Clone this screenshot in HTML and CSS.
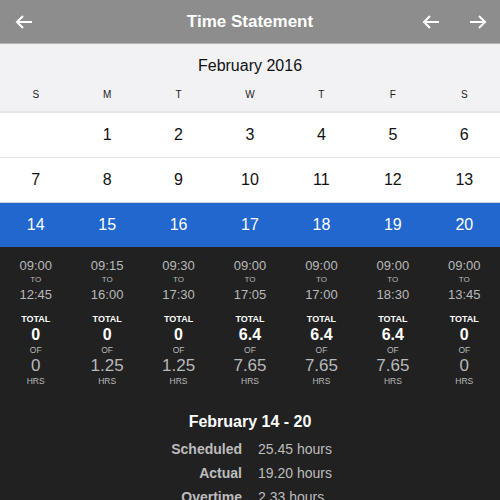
FILE: index.html
```html
<!DOCTYPE html>
<html>
<head>
<meta charset="utf-8">
<link rel="stylesheet" href="styles.css">
</head>
<body>
<div class="app">
  <header class="topbar">
    <button class="icon-btn back" aria-label="Back">
      <svg width="18" height="14" viewBox="0 0 18 14"><path d="M17 7H2M8 1L2 7l6 6" fill="none" stroke="#fff" stroke-width="2"/></svg>
    </button>
    <h1 class="title">Time Statement</h1>
    <div class="nav">
      <button class="icon-btn" aria-label="Previous">
        <svg width="18" height="14" viewBox="0 0 18 14"><path d="M17 7H2M8 1L2 7l6 6" fill="none" stroke="#fff" stroke-width="2"/></svg>
      </button>
      <button class="icon-btn" aria-label="Next">
        <svg width="18" height="14" viewBox="0 0 18 14"><path d="M1 7h15M10 1l6 6-6 6" fill="none" stroke="#fff" stroke-width="2"/></svg>
      </button>
    </div>
  </header>

  <section class="month">
    <div class="month-name">February 2016</div>
    <div class="weekdays">
      <span>S</span><span>M</span><span>T</span><span>W</span><span>T</span><span>F</span><span>S</span>
    </div>
  </section>

  <div class="week">
    <span></span><span>1</span><span>2</span><span>3</span><span>4</span><span>5</span><span>6</span>
  </div>
  <div class="week">
    <span>7</span><span>8</span><span>9</span><span>10</span><span>11</span><span>12</span><span>13</span>
  </div>
  <div class="week selected">
    <span>14</span><span>15</span><span>16</span><span>17</span><span>18</span><span>19</span><span>20</span>
  </div>

  <section class="details">
    <div class="days">
      <div class="day"><div class="t1">09:00</div><div class="to">TO</div><div class="t2">12:45</div><div class="total">TOTAL</div><div class="act">0</div><div class="of">OF</div><div class="sch">0</div><div class="hrs">HRS</div></div>
      <div class="day"><div class="t1">09:15</div><div class="to">TO</div><div class="t2">16:00</div><div class="total">TOTAL</div><div class="act">0</div><div class="of">OF</div><div class="sch">1.25</div><div class="hrs">HRS</div></div>
      <div class="day"><div class="t1">09:30</div><div class="to">TO</div><div class="t2">17:30</div><div class="total">TOTAL</div><div class="act">0</div><div class="of">OF</div><div class="sch">1.25</div><div class="hrs">HRS</div></div>
      <div class="day"><div class="t1">09:00</div><div class="to">TO</div><div class="t2">17:05</div><div class="total">TOTAL</div><div class="act">6.4</div><div class="of">OF</div><div class="sch">7.65</div><div class="hrs">HRS</div></div>
      <div class="day"><div class="t1">09:00</div><div class="to">TO</div><div class="t2">17:00</div><div class="total">TOTAL</div><div class="act">6.4</div><div class="of">OF</div><div class="sch">7.65</div><div class="hrs">HRS</div></div>
      <div class="day"><div class="t1">09:00</div><div class="to">TO</div><div class="t2">18:30</div><div class="total">TOTAL</div><div class="act">6.4</div><div class="of">OF</div><div class="sch">7.65</div><div class="hrs">HRS</div></div>
      <div class="day"><div class="t1">09:00</div><div class="to">TO</div><div class="t2">13:45</div><div class="total">TOTAL</div><div class="act">0</div><div class="of">OF</div><div class="sch">0</div><div class="hrs">HRS</div></div>
    </div>

    <div class="summary">
      <h2 class="range">February 14 - 20</h2>
      <div class="stats">
        <span class="label">Scheduled</span><span class="value">25.45 hours</span>
        <span class="label">Actual</span><span class="value">19.20 hours</span>
        <span class="label">Overtime</span><span class="value">2.33 hours</span>
      </div>
    </div>
  </section>
</div>
</body>
</html>
```

FILE: styles.css
```css
* { box-sizing: border-box; }
html, body {
  margin: 0;
  padding: 0;
  width: 500px;
  height: 500px;
  overflow: hidden;
  background: #212121;
  font-family: "Liberation Sans", Arial, sans-serif;
}
.app { width: 500px; }

.topbar {
  height: 44px;
  background: #8c8d8c;
  border-bottom: 1px solid #b4b5b4;
  display: flex;
  align-items: center;
  justify-content: space-between;
  position: relative;
  padding: 0 13px 0 15px;
}
.icon-btn {
  background: none;
  border: 0;
  padding: 0;
  width: 18px;
  height: 14px;
  display: flex;
}
.title {
  position: absolute;
  left: 0;
  right: 0;
  top: 0;
  margin: 0;
  line-height: 43px;
  text-align: center;
  color: #fff;
  font-size: 17px;
  font-weight: bold;
  pointer-events: none;
}
.nav {
  display: flex;
  gap: 29px;
}

.month {
  background: #f2f2f4;
  height: 69px;
  border-bottom: 2px solid #e4e4e9;
}
.month-name {
  text-align: center;
  font-size: 16px;
  color: #111;
  line-height: 20px;
  padding-top: 12px;
}
.weekdays {
  display: grid;
  grid-template-columns: repeat(7, 1fr);
  margin-top: 13px;
  font-size: 10px;
  line-height: 12px;
  color: #222;
  text-align: center;
}

.week {
  display: grid;
  grid-template-columns: repeat(7, 1fr);
  height: 45px;
  background: #fff;
  border-bottom: 1px solid #e4e4e9;
  text-align: center;
  align-items: center;
  font-size: 16px;
  color: #111;
}
.week.selected {
  background: #2167cd;
  color: #fff;
  height: 44px;
  border-bottom: 0;
}
.week:nth-child(4) { border-bottom-color: #c9d2de; }

.details {
  background: #212121;
  padding-top: 12px;
}
.days {
  display: grid;
  grid-template-columns: repeat(7, 1fr);
  text-align: center;
}
.day { color: #b9b9b9; }
.t1 { font-size: 13px; line-height: 14px; }
.to { font-size: 8px; line-height: 14px; }
.t2 { font-size: 13px; line-height: 16px; }
.total { font-size: 9px; font-weight: bold; color: #fff; line-height: 12px; margin-top: 10px; }
.act { font-size: 16px; font-weight: bold; color: #fff; line-height: 20px; }
.of { font-size: 8.5px; line-height: 10px; }
.sch { font-size: 17px; line-height: 22px; }
.hrs { font-size: 8.5px; line-height: 8px; }

.summary { padding-top: 26px; }
.range {
  margin: 0 0 4px;
  text-align: center;
  color: #fff;
  font-size: 16px;
  font-weight: bold;
  line-height: 22px;
}
.stats {
  display: grid;
  grid-template-columns: 1fr 1fr;
  column-gap: 16px;
  font-size: 14px;
  line-height: 24px;
  color: #bdbdbd;
}
.label { text-align: right; font-weight: bold; }
.value { text-align: left; }
```
